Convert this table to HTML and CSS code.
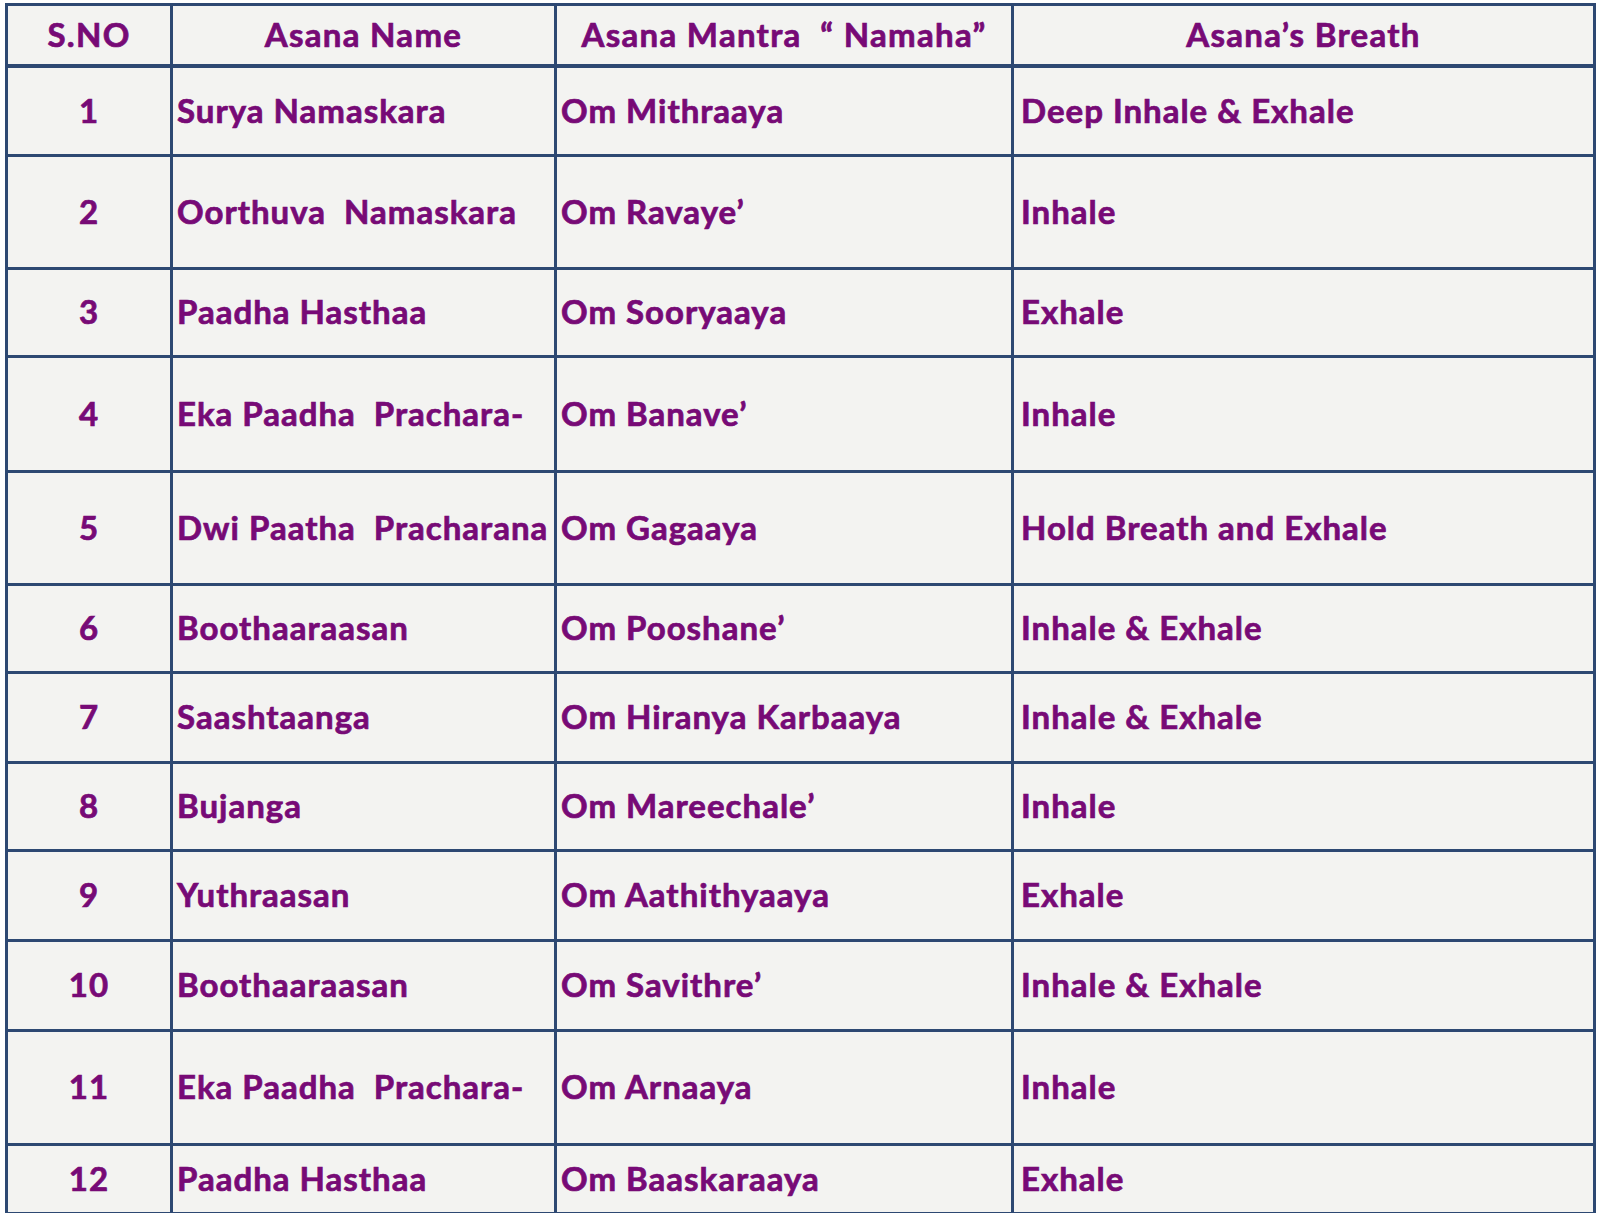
FILE: index.html
```html
<!DOCTYPE html>
<html>
<head>
<meta charset="utf-8">
<link rel="stylesheet" href="styles.css">
</head>
<body>
<table class="asana-table">
  <colgroup>
    <col class="c-sno"><col class="c-name"><col class="c-mantra"><col class="c-breath">
  </colgroup>
  <thead>
    <tr class="head-row">
      <th>S.NO</th>
      <th>Asana Name</th>
      <th>Asana Mantra&nbsp; “ Namaha”</th>
      <th>Asana’s Breath</th>
    </tr>
  </thead>
  <tbody>
    <tr class="h89"><td class="num">1</td><td>Surya Namaskara</td><td>Om Mithraaya</td><td class="breath">Deep Inhale &amp; Exhale</td></tr>
    <tr class="h113"><td class="num">2</td><td>Oorthuva&nbsp; Namaskara</td><td>Om Ravaye’</td><td class="breath">Inhale</td></tr>
    <tr class="h88"><td class="num">3</td><td>Paadha Hasthaa</td><td>Om Sooryaaya</td><td class="breath">Exhale</td></tr>
    <tr class="h115"><td class="num">4</td><td>Eka Paadha&nbsp; Prachara-</td><td>Om Banave’</td><td class="breath">Inhale</td></tr>
    <tr class="h113"><td class="num">5</td><td>Dwi Paatha&nbsp; Pracharana</td><td>Om Gagaaya</td><td class="breath">Hold Breath and Exhale</td></tr>
    <tr class="h88"><td class="num">6</td><td>Boothaaraasan</td><td>Om Pooshane’</td><td class="breath">Inhale &amp; Exhale</td></tr>
    <tr class="h90"><td class="num">7</td><td>Saashtaanga</td><td>Om Hiranya Karbaaya</td><td class="breath">Inhale &amp; Exhale</td></tr>
    <tr class="h88"><td class="num">8</td><td>Bujanga</td><td>Om Mareechale’</td><td class="breath">Inhale</td></tr>
    <tr class="h90"><td class="num">9</td><td>Yuthraasan</td><td>Om Aathithyaaya</td><td class="breath">Exhale</td></tr>
    <tr class="h90"><td class="num">10</td><td>Boothaaraasan</td><td>Om Savithre’</td><td class="breath">Inhale &amp; Exhale</td></tr>
    <tr class="h114"><td class="num">11</td><td>Eka Paadha&nbsp; Prachara-</td><td>Om Arnaaya</td><td class="breath">Inhale</td></tr>
    <tr class="h69"><td class="num">12</td><td>Paadha Hasthaa</td><td>Om Baaskaraaya</td><td class="breath">Exhale</td></tr>
  </tbody>
</table>
</body>
</html>
```
FILE: styles.css
```css
html, body {
  margin: 0;
  padding: 0;
  background: #ffffff;
}
body {
  padding: 3px 0 0 5px;
}
.asana-table {
  border-collapse: collapse;
  table-layout: fixed;
  width: 1588px;
  background: #f3f3f1;
  font-family: Lato, "Open Sans", sans-serif;
  font-weight: 700;
  font-size: 33px;
  letter-spacing: 1px;
  color: #770a76;
  -webkit-text-stroke: 0.7px #770a76;
}
.c-sno { width: 165px; }
.c-name { width: 384px; }
.c-mantra { width: 457px; }
.c-breath { width: 582px; }
.asana-table th,
.asana-table td {
  border: 3px solid #2d4872;
  padding: 0 4px;
  vertical-align: middle;
  white-space: nowrap;
  overflow: visible;
  line-height: 1.2;
}
.asana-table th {
  font-weight: 700;
  text-align: center;
  height: 58px;
  letter-spacing: 1.3px;
  border-bottom: 4px solid #2d4872;
}
.asana-table td { text-align: left; }
.asana-table td.num { text-align: center; }
.asana-table td.breath { padding-left: 7px; }
.h69 { height: 69px; }
.h88 { height: 88px; }
.h89 { height: 89px; }
.h90 { height: 90px; }
.h113 { height: 113px; }
.h114 { height: 114px; }
.h115 { height: 115px; }
```
